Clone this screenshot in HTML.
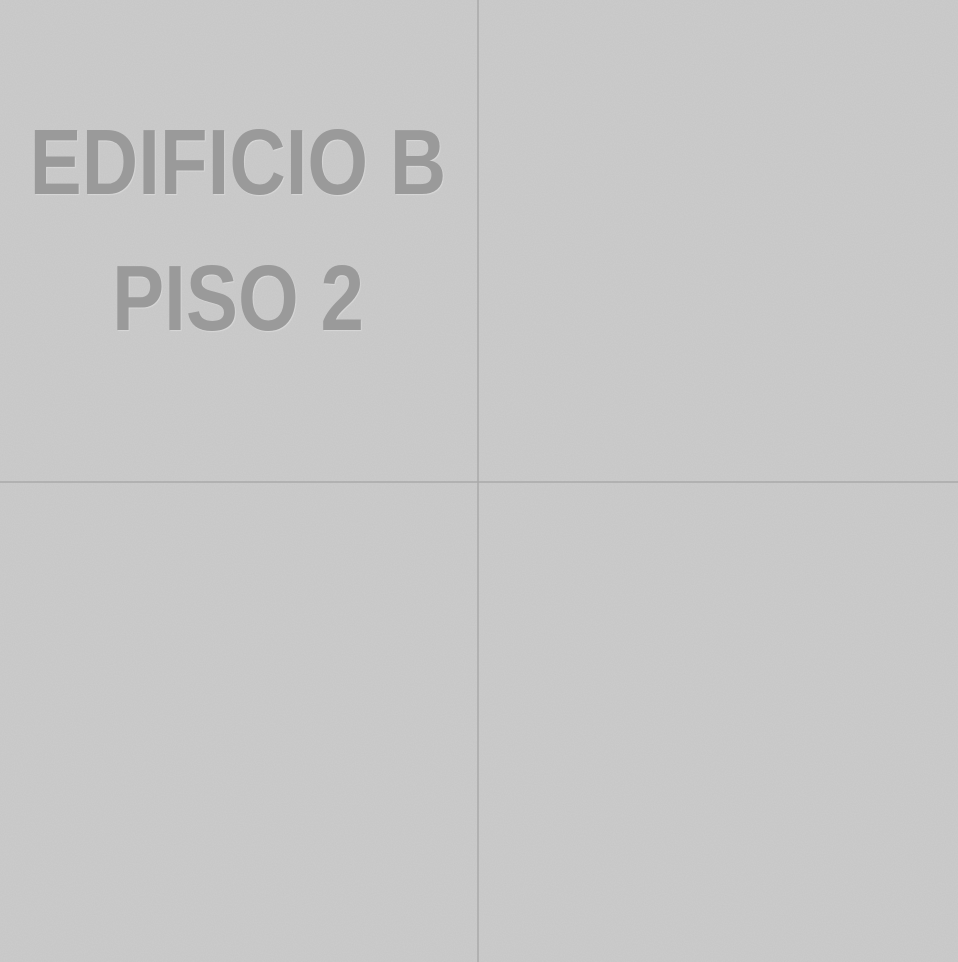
<!DOCTYPE html>
<html><head><meta charset="utf-8"><style>
html,body{margin:0;padding:0}
body{width:958px;height:962px;background:#c9c9c9;position:relative;overflow:hidden}
svg.bg{position:absolute;left:0;top:0}
.t{position:absolute;left:-262px;width:1000px;white-space:nowrap;text-align:center;font-family:"Liberation Sans",sans-serif;font-weight:bold;color:#9a9a9a;font-size:93px;line-height:1;transform:scaleX(0.84);transform-origin:500px 0;text-shadow:1px 1px 1px rgba(255,255,255,0.3)}
</style></head><body>
<svg class="bg" width="958" height="962">
<filter id="n"><feTurbulence type="fractalNoise" baseFrequency="0.9" numOctaves="2" seed="3"/><feColorMatrix type="matrix" values="0 0 0 0 0.5  0 0 0 0 0.5  0 0 0 0 0.5  0 0 0 -1.6 1.0"/></filter>
<rect width="958" height="962" fill="#cacaca"/>
<rect width="958" height="962" filter="url(#n)" opacity="0.35"/>
<line x1="478" y1="0" x2="478" y2="962" stroke="#a9a9a9" stroke-width="1.5"/>
<line x1="0" y1="482" x2="958" y2="482" stroke="#a9a9a9" stroke-width="1.5"/>
</svg>
<div class="t" style="top:116px">EDIFICIO B</div>
<div class="t" style="top:252px">PISO 2</div>
</body></html>
